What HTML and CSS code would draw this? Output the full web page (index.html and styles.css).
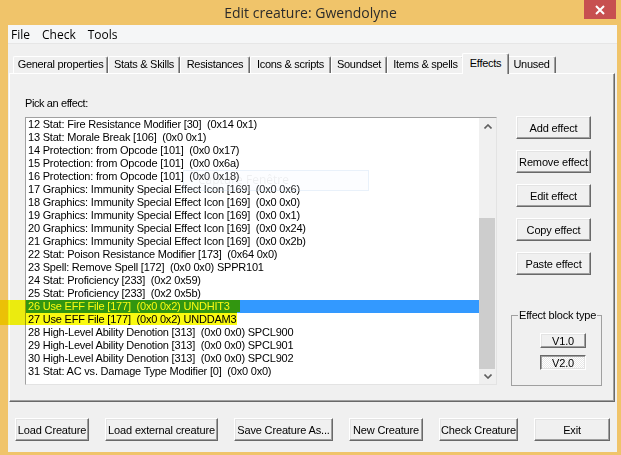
FILE: index.html
```html
<!DOCTYPE html>
<html>
<head>
<meta charset="utf-8">
<link rel="stylesheet" href="styles.css">
</head>
<body>
<div class="window">
  <div class="titlebar">
    <span class="title">Edit creature: Gwendolyne</span>
    <div class="close"><svg width="10" height="10" viewBox="0 0 10 10"><path d="M1 1 L9 9 M9 1 L1 9" stroke="#fff" stroke-width="2" fill="none"/></svg></div>
  </div>
  <div class="frame">
    <div class="client">
      <div class="menubar"><span>File</span><span>Check</span><span>Tools</span></div>
      <div class="tabs">
        <div class="tab t-general">General properties</div>
        <div class="tab t-stats">Stats &amp; Skills</div>
        <div class="tab t-resist">Resistances</div>
        <div class="tab t-icons">Icons &amp; scripts</div>
        <div class="tab t-sound">Soundset</div>
        <div class="tab t-items">Items &amp; spells</div>
        <div class="tab t-effects active">Effects</div>
        <div class="tab t-unused">Unused</div>
      </div>
      <div class="panel">
        <div class="col-list">
          <div class="label">Pick an effect:</div>
          <div class="listbox">
            <div class="items">
              <div class="row">12 Stat: Fire Resistance Modifier [30]  (0x14 0x1)</div>
              <div class="row">13 Stat: Morale Break [106]  (0x0 0x1)</div>
              <div class="row">14 Protection: from Opcode [101]  (0x0 0x17)</div>
              <div class="row">15 Protection: from Opcode [101]  (0x0 0x6a)</div>
              <div class="row">16 Protection: from Opcode [101]  (0x0 0x18)</div>
              <div class="row">17 Graphics: Immunity Special Effect Icon [169]  (0x0 0x6)</div>
              <div class="row">18 Graphics: Immunity Special Effect Icon [169]  (0x0 0x0)</div>
              <div class="row">19 Graphics: Immunity Special Effect Icon [169]  (0x0 0x1)</div>
              <div class="row">20 Graphics: Immunity Special Effect Icon [169]  (0x0 0x24)</div>
              <div class="row">21 Graphics: Immunity Special Effect Icon [169]  (0x0 0x2b)</div>
              <div class="row">22 Stat: Poison Resistance Modifier [173]  (0x64 0x0)</div>
              <div class="row">23 Spell: Remove Spell [172]  (0x0 0x0) SPPR101</div>
              <div class="row">24 Stat: Proficiency [233]  (0x2 0x59)</div>
              <div class="row">25 Stat: Proficiency [233]  (0x2 0x5b)</div>
              <div class="row sel">26 Use EFF File [177]  (0x0 0x2) UNDHIT3</div>
              <div class="row">27 Use EFF File [177]  (0x0 0x2) UNDDAM3</div>
              <div class="row">28 High-Level Ability Denotion [313]  (0x0 0x0) SPCL900</div>
              <div class="row">29 High-Level Ability Denotion [313]  (0x0 0x0) SPCL901</div>
              <div class="row">30 High-Level Ability Denotion [313]  (0x0 0x0) SPCL902</div>
              <div class="row">31 Stat: AC vs. Damage Type Modifier [0]  (0x0 0x0)</div>
            </div>
            <div class="vscroll">
              <div class="arrow up"><svg width="8" height="5" viewBox="0 0 8 5"><polyline points="0.5,4.5 4,1 7.5,4.5" fill="none" stroke="#606060" stroke-width="1.6"/></svg></div>
              <div class="track"><div class="thumb"></div></div>
              <div class="arrow down"><svg width="8" height="5" viewBox="0 0 8 5"><polyline points="0.5,0.5 4,4 7.5,0.5" fill="none" stroke="#606060" stroke-width="1.6"/></svg></div>
            </div>
          </div>
        </div>
        <div class="col-buttons">
          <button class="btn side">Add effect</button>
          <button class="btn side">Remove effect</button>
          <button class="btn side">Edit effect</button>
          <button class="btn side">Copy effect</button>
          <button class="btn side">Paste effect</button>
          <fieldset class="group">
            <legend>Effect block type</legend>
            <div class="vgroup">
              <button class="btn vbtn">V1.0</button>
              <button class="btn vbtn pressed">V2.0</button>
            </div>
          </fieldset>
        </div>
      </div>
      <div class="bottombar">
        <button class="btn bb w74">Load Creature</button>
        <button class="btn bb w113">Load external creature</button>
        <button class="btn bb w99">Save Creature As...</button>
        <button class="btn bb w74">New Creature</button>
        <button class="btn bb w79">Check Creature</button>
        <button class="btn bb w76">Exit</button>
      </div>
    </div>
  </div>
  <div class="ghost"><span>Capture Fenêtre</span></div>
  <div class="highlight">
    <div class="hl1"></div>
    <div class="hl2"></div>
  </div>
</div>
</body>
</html>
```
FILE: styles.css
```css
html, body {
  margin: 0;
  padding: 0;
}
body {
  width: 621px;
  height: 455px;
  overflow: hidden;
  background: #f0c46a;
  font-family: "Liberation Sans", Arial, sans-serif;
  font-size: 11px;
  color: #000;
}
.window {
  position: relative;
  width: 621px;
  height: 455px;
}
.titlebar {
  height: 25px;
  display: flex;
  justify-content: center;
  align-items: center;
  position: relative;
}
.title {
  font-family: "Open Sans", "Noto Sans", sans-serif;
  font-size: 14px;
  color: #2b2b2b;
  margin-top: -1px;
}
.close {
  position: absolute;
  right: 5px;
  top: 0;
  width: 32px;
  height: 19px;
  background: #c75050;
  display: flex;
  align-items: center;
  justify-content: center;
}
.frame {
  padding: 0 4px 3px 8px;
}
.client {
  background: #f0f0f0;
  height: 427px;
  display: flex;
  flex-direction: column;
}
.menubar {
  height: 18px;
  background: #f5f6f7;
  border-bottom: 1px solid #e6e6e6;
  display: flex;
  align-items: center;
  gap: 12px;
  padding-left: 3px;
  font-family: "Open Sans", "Noto Sans", sans-serif;
  font-size: 12px;
  color: #000;
}
.tabs {
  height: 29px;
  display: flex;
  align-items: flex-end;
  padding-left: 5px;
}
.tab {
  box-sizing: border-box;
  height: 17px;
  line-height: 15px;
  padding: 0;
  text-align: center;
  border-top: 1px solid #fff;
  border-left: 1px solid #fff;
  border-right: 1px solid #696969;
  box-shadow: inset -1px 0 0 #a0a0a0;
  border-radius: 2px 2px 0 0;
  letter-spacing: -0.3px;
  white-space: nowrap;
}
.t-general { width: 95px; }
.t-stats { width: 72px; }
.t-resist { width: 70px; }
.t-icons { width: 81px; }
.t-sound { width: 56px; }
.t-items { width: 77px; }
.t-effects { width: 47px; }
.t-unused { width: 49px; }
.tab.active {
  height: 21px;
  line-height: 18px;
  margin: 0 -2px -1px;
  background: #f0f0f0;
  position: relative;
  z-index: 1;
}
.panel {
  box-sizing: border-box;
  height: 329px;
  margin: 0 2px 0 1px;
  border-top: 1px solid #fff;
  border-left: 1px solid #fff;
  border-right: 1px solid #696969;
  border-bottom: 1px solid #696969;
  box-shadow: inset -1px -1px 0 #a0a0a0;
  display: flex;
  padding-left: 15px;
}
.col-list {
  padding-top: 23px;
}
.label {
  line-height: 13px;
  height: 13px;
  letter-spacing: -0.4px;
  margin-bottom: 7px;
}
.listbox {
  box-sizing: border-box;
  width: 472px;
  height: 268px;
  border-top: 1px solid #a0a0a0;
  border-left: 1px solid #a0a0a0;
  border-right: 1px solid #e3e3e3;
  border-bottom: 1px solid #e3e3e3;
  background: #fff;
  display: flex;
}
.items {
  flex: 1;
  overflow: hidden;
}
.row {
  height: 13px;
  line-height: 13px;
  padding-left: 2px;
  white-space: pre;
  letter-spacing: -0.2px;
}
.row.sel {
  background: #3399ff;
  color: #fff;
}
.vscroll {
  width: 17px;
  background: #f0f0f0;
  display: flex;
  flex-direction: column;
}
.arrow {
  display: flex;
  align-items: center;
  justify-content: center;
}
.arrow.up {
  height: 17px;
}
.arrow.down {
  height: 15px;
}
.track {
  flex: 1;
  display: flex;
  flex-direction: column;
  justify-content: flex-end;
}
.thumb {
  height: 151px;
  margin-right: 1px;
  background: #cdcdcd;
}
.col-buttons {
  margin-left: 14px;
  width: 91px;
  padding-top: 42px;
  display: flex;
  flex-direction: column;
}
.btn {
  font-family: "Liberation Sans", Arial, sans-serif;
  font-size: 11px;
  color: #000;
  background: #f0f0f0;
  box-sizing: border-box;
  border: 1px solid;
  border-color: #fff #696969 #696969 #fff;
  box-shadow: inset -1px -1px 0 #a0a0a0, inset 1px 1px 0 #e3e3e3;
  padding: 0;
  margin: 0;
  letter-spacing: -0.15px;
  white-space: nowrap;
}
.side {
  width: 75px;
  height: 23px;
  margin: 0 0 11px 5px;
}
.group {
  box-sizing: border-box;
  width: 91px;
  margin: 23px 0 0 0;
  padding: 11px 0 15px 0;
  border: 1px solid #a0a0a0;
  min-width: 0;
}
.group legend {
  margin-left: 6px;
  padding: 0 1px;
  line-height: 13px;
  letter-spacing: -0.2px;
}
.vgroup {
  padding-left: 28px;
  display: flex;
  flex-direction: column;
  gap: 7px;
}
.vbtn {
  width: 46px;
  height: 15px;
  line-height: 12px;
}
.vbtn.pressed {
  border-color: #696969 #fff #fff #696969;
  box-shadow: inset 1px 1px 0 #a0a0a0, inset -1px -1px 0 #e3e3e3;
  background: repeating-conic-gradient(#ffffff 0 25%, #e8e8e8 0 50%) 0 0 / 2px 2px;
  padding-top: 1px;
}
.bottombar {
  margin-top: 16px;
  padding-left: 7px;
  display: flex;
  gap: 16px;
}
.bb {
  height: 23px;
}
.w74 { width: 74px; }
.w113 { width: 113px; }
.w99 { width: 99px; }
.w79 { width: 79px; }
.w76 { width: 76px; }
.ghost {
  position: absolute;
  left: 183px;
  top: 170px;
  width: 186px;
  height: 21px;
  box-sizing: border-box;
  border: 1px solid rgba(190, 215, 240, 0.3);
  background: rgba(235, 243, 252, 0.15);
  display: flex;
  align-items: center;
  padding-left: 14px;
  padding-bottom: 2px;
  font-family: "Open Sans", sans-serif;
  font-size: 12px;
  color: rgba(0, 0, 0, 0.06);
}
.highlight {
  position: absolute;
  left: 0;
  top: 300px;
  mix-blend-mode: multiply;
}
.hl1 {
  width: 240px;
  height: 12px;
  background: #fafa10;
}
.hl2 {
  width: 237px;
  height: 13px;
  background: #fafa10;
}
```
